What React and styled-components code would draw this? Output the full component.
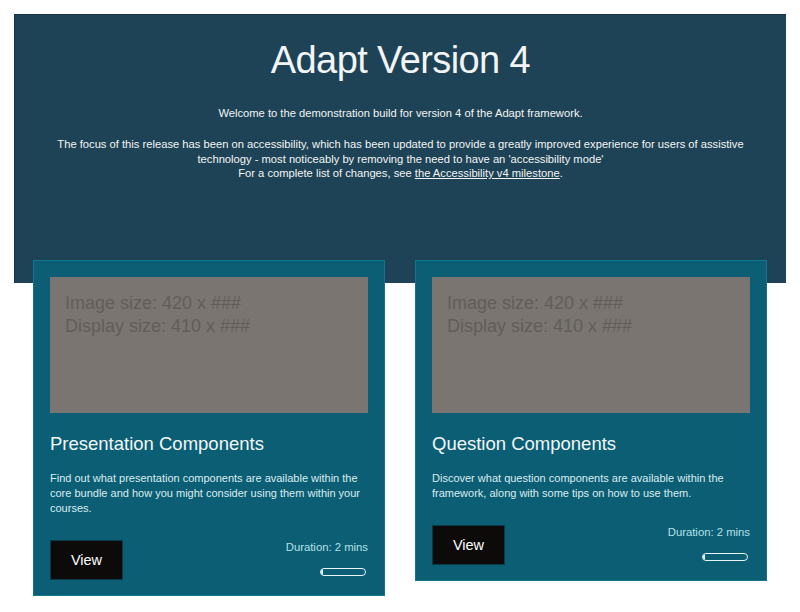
import React from "react";
import styled, { createGlobalStyle } from "styled-components";

const GlobalStyle = createGlobalStyle`
  html, body {
    margin: 0;
    padding: 0;
    background: #ffffff;
  }
  body {
    font-family: "Liberation Sans", Arial, sans-serif;
  }
`;

const Page = styled.div`
  padding: 14px 14px 16px 14px;
  display: flex;
  flex-direction: column;
  align-items: center;
`;

const Header = styled.header`
  width: 772px;
  height: 269px;
  box-sizing: border-box;
  background: #1f4356;
  border-top: 1px solid #163444;
  border-left: 1px solid #163444;
  padding: 25px 36px 0 36px;
  color: #f2f4f5;
  text-align: center;
`;

const Title = styled.h1`
  margin: 0;
  font-size: 38px;
  line-height: 40px;
  font-weight: 400;
  letter-spacing: -0.6px;
`;

const Intro = styled.div`
  margin-top: 26px;
  font-size: 11.2px;
  line-height: 14.6px;

  p {
    margin: 0 0 16.5px 0;
  }

  a {
    color: #f2f4f5;
    text-decoration: underline;
  }
`;

const Cards = styled.div`
  margin-top: -23px;
  display: flex;
  align-items: flex-start;
  gap: 30px;
`;

const Card = styled.article`
  width: 352px;
  box-sizing: border-box;
  background: #0b5e74;
  border: 1px solid #14768c;
  padding: 16px 16px 15px 16px;
  color: #f2f6f7;
`;

const Placeholder = styled.div`
  height: 136px;
  background: #7a7571;
  padding: 15px 15px 0 15px;
  box-sizing: border-box;
  color: #625d5a;
  font-size: 18px;
  line-height: 23px;
`;

const CardTitle = styled.h2`
  margin: 20px 0 0 0;
  font-size: 18.5px;
  line-height: 22px;
  font-weight: 400;
`;

const CardBody = styled.p`
  margin: 16px 0 0 0;
  font-size: 11px;
  line-height: 15px;
  color: #dcecf0;
`;

const CardFooter = styled.div`
  margin-top: 24px;
  display: flex;
  justify-content: space-between;
  align-items: flex-start;
`;

const ViewButton = styled.button`
  width: 73px;
  height: 40px;
  border: 1px solid #0a3a48;
  background: #0d0b09;
  color: #ffffff;
  font-family: "Liberation Sans", Arial, sans-serif;
  font-size: 14.5px;
  cursor: pointer;
`;

const Meta = styled.div`
  display: flex;
  flex-direction: column;
  align-items: flex-end;
  padding-top: 1px;
`;

const Duration = styled.span`
  font-size: 11.3px;
  line-height: 13px;
  color: #b6e0e8;
`;

const Progress = styled.div`
  margin-top: 14px;
  margin-right: 2px;
  width: 46px;
  height: 8px;
  box-sizing: border-box;
  border: 1.5px solid #e8f4f6;
  border-radius: 5px;
  overflow: hidden;
  display: flex;
`;

const ProgressFill = styled.div`
  height: 100%;
  background: #e8f4f6;
  border-radius: 4px;
`;

const courses = [
  {
    title: "Presentation Components",
    body:
      "Find out what presentation components are available within the core bundle and how you might consider using them within your courses.",
    progress: 4,
  },
  {
    title: "Question Components",
    body:
      "Discover what question components are available within the framework, along with some tips on how to use them.",
    progress: 4,
  },
];

const CourseCard = ({ title, body, progress }) => (
  <Card>
    <Placeholder>
      Image size: 420 x ###
      <br />
      Display size: 410 x ###
    </Placeholder>
    <CardTitle>{title}</CardTitle>
    <CardBody>{body}</CardBody>
    <CardFooter>
      <ViewButton>View</ViewButton>
      <Meta>
        <Duration>Duration: 2 mins</Duration>
        <Progress>
          <ProgressFill style={{ width: `${progress}%` }} />
        </Progress>
      </Meta>
    </CardFooter>
  </Card>
);

const App = () => (
  <>
    <GlobalStyle />
    <Page>
      <Header>
        <Title>Adapt Version 4</Title>
        <Intro>
          <p>Welcome to the demonstration build for version 4 of the Adapt framework.</p>
          The focus of this release has been on accessibility, which has been updated to
          provide a greatly improved experience for users of assistive technology - most
          noticeably by removing the need to have an 'accessibility mode'
          <br />
          For a complete list of changes, see <a href="#milestone">the Accessibility v4 milestone</a>.
        </Intro>
      </Header>
      <Cards>
        {courses.map((c) => (
          <CourseCard key={c.title} {...c} />
        ))}
      </Cards>
    </Page>
  </>
);

export default App;
